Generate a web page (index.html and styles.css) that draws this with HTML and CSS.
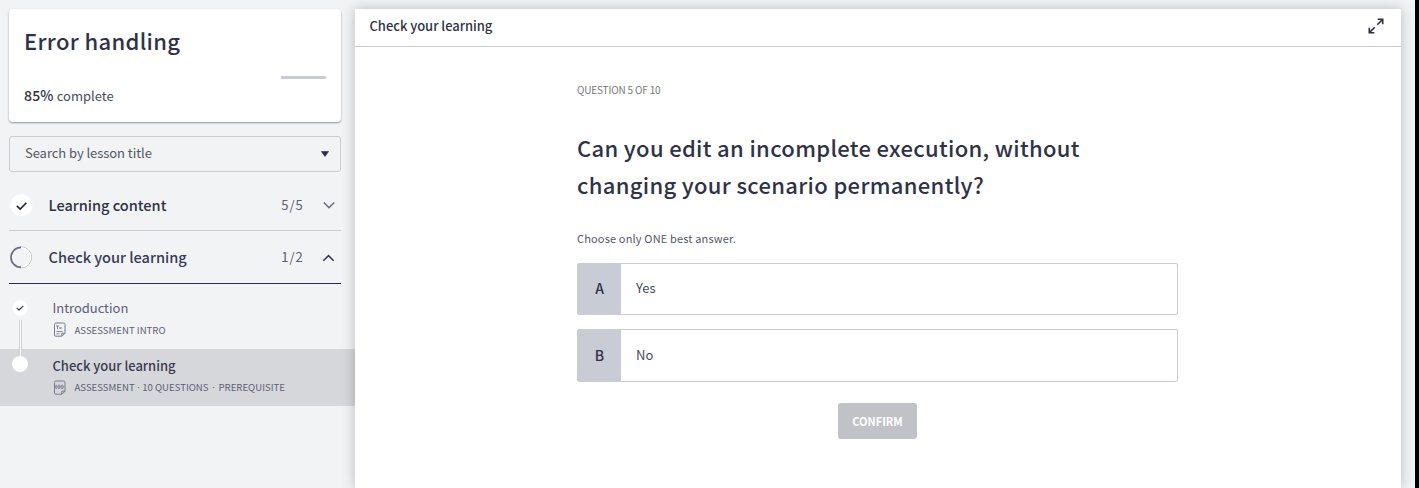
FILE: index.html
```html
<!DOCTYPE html>
<html lang="en">
<head>
<meta charset="utf-8">
<title>Error handling</title>
<link rel="stylesheet" href="styles.css">
</head>
<body>
<div class="app">
  <aside class="sidebar">
    <section class="card">
      <h1 class="course-title"><span>Error handling</span></h1>
      <div class="progress"><div class="progress-rest"></div></div>
      <p class="complete"><span class="complete-value">85%</span> <span class="complete-label">complete</span></p>
    </section>
    <div class="search">
      <span class="search-label">Search by lesson title</span>
      <svg class="caret" width="8" height="6" viewBox="0 0 8 6"><path d="M.4.5h7.2L4 5.5z" fill="#2b2d4a" stroke="#2b2d4a" stroke-width=".6" stroke-linejoin="round"/></svg>
    </div>
    <div class="section">
      <svg class="section-icon" width="24" height="24" viewBox="0 0 24 24"><circle cx="12.300" cy="12.300" r="11" fill="#fff"/><path d="M7.800 12.900l3.400 3.200 6.200-6.400" fill="none" stroke="#21232f" stroke-width="1.600"/></svg>
      <span class="section-name">Learning content</span>
      <span class="count">5/5</span>
      <svg class="chevron" width="14" height="8" viewBox="0 0 14 8"><path d="M1.800 1.500L7 6.600 12.200 1.500" fill="none" stroke="#6f7287" stroke-width="1.500"/></svg>
    </div>
    <div class="section section-open">
      <svg class="section-icon" width="24" height="24" viewBox="0 0 24 24"><path d="M12 1.900a10.500 10.500 0 0 1 0 21" fill="none" stroke="#a4a6b4" stroke-width=".8"/><path d="M12 2.400a10 10 0 0 0 0 20" fill="none" stroke="#6c6f85" stroke-width="1.700"/><path d="M12 2.700a9.700 9.700 0 0 1 0 19.400" fill="none" stroke="#fff" stroke-width="1.200"/></svg>
      <span class="section-name">Check your learning</span>
      <span class="count">1/2</span>
      <svg class="chevron chevron-up" width="14" height="8" viewBox="0 0 14 8"><path d="M1.300 6.700L6.500 1.600 11.700 6.700" fill="none" stroke="#34364e" stroke-width="1.500"/></svg>
    </div>
    <div class="lessons">
      <div class="lesson">
        <div class="rail">
          <svg class="step-done" width="16" height="16" viewBox="0 0 16 16"><circle cx="8.200" cy="8" r="7.700" fill="#fff"/><path d="M4.800 8.100l2.200 1.900 4.200-3.900" fill="none" stroke="#333" stroke-width="1.200"/></svg>
          <span class="rail-line"></span>
        </div>
        <div class="lesson-text">
          <div class="lesson-name intro">Introduction</div>
          <div class="meta">
            <svg width="13" height="15" viewBox="0 0 13 15" fill="none" stroke="#777a8e"><path d="M2.500 1h8q1.500 0 1.500 1.500v8.700l-3 3H2.500Q1.500 14.200 1.500 13V2.500Q1.500 1 2.500 1zM8.800 14v-2.800h3" stroke-width="1"/><path d="M3 4h3M4.500 4v3.200M6.500 5l2 2.200M8.500 5l-2 2.200M3.500 9.500h6M3.500 11.800h3" stroke-width=".9"/></svg>
            <span>ASSESSMENT INTRO</span>
          </div>
        </div>
      </div>
      <div class="lesson lesson-current">
        <div class="rail">
          <span class="rail-line rail-line-short"></span>
          <span class="step-current"></span>
        </div>
        <div class="lesson-text">
          <div class="lesson-name current">Check your learning</div>
          <div class="meta">
            <svg width="13" height="15" viewBox="0 0 13 15" fill="none" stroke="#777a8e"><path d="M2.500 1h8q1.500 0 1.500 1.500v8.700l-3 3H2.500Q1.500 14.200 1.500 13V2.500Q1.500 1 2.500 1zM8.800 14v-2.800h3" stroke-width="1"/><path d="M4 5.200H2.800v3.300H4M5 5.200h1.800v3.300H5zM8.200 5.200H10v3.300H8.200zM2 6.800h9.500" stroke-width=".7"/></svg>
            <span class="meta-list"><span>ASSESSMENT</span><span class="dot">·</span><span>10 QUESTIONS</span><span class="dot dot-wide">·</span><span>PREREQUISITE</span></span>
          </div>
        </div>
      </div>
    </div>
  </aside>
  <main class="panel">
    <header class="panel-head">
      <span class="panel-title">Check your learning</span>
      <svg class="expand" width="16" height="16" viewBox="0 0 16 16" fill="none" stroke="#2b2d42" stroke-width="1.600"><path d="M9.700 1.300h5v5M14.500 1.500L9.300 6.700M6.300 14.700h-5v-5M1.500 14.500l5.200-5.200"/></svg>
    </header>
    <div class="quiz">
      <div class="counter"><span>QUESTION 5 OF 10</span></div>
      <h2 class="question">Can you edit an incomplete execution, without<br>changing your scenario permanently?</h2>
      <p class="hint"><span>Choose only ONE best answer.</span></p>
      <div class="answer"><span class="letter">A</span><span class="answer-text">Yes</span></div>
      <div class="answer answer-b"><span class="letter">B</span><span class="answer-text">No</span></div>
      <button class="confirm">CONFIRM</button>
    </div>
  </main>
  <div class="edge"></div>
</div>
</body>
</html>
```
FILE: styles.css
```css
* { box-sizing: border-box; }
body { margin: 0; background: #f1f3f5; color: #2f3247; font-family: "Noto Sans CJK SC", "Noto Sans", sans-serif; }
h1, h2, p { margin: 0; }
svg { display: block; flex: none; }
.app { display: flex; height: 488px; overflow: hidden; }
.sidebar { width: 355px; flex: none; padding-top: 9px; }
.card { margin: 0 14px 0 9px; height: 113px; padding: 13px 15px 0; background: #fff; border-radius: 4px; box-shadow: 0 1px 2px rgba(0,0,0,.4); }
.course-title { font-size: 22px; line-height: 36px; font-weight: 500; letter-spacing: .33px; }
.progress { height: 3px; margin-top: 18px; display: flex; justify-content: flex-end; }
.progress-rest { width: 45px; background: #c9cbd5; border-radius: 0 1px 1px 0; }
.complete { font-size: 13px; line-height: 20px; margin-top: 7px; display: flex; gap: 3px; color: #484b5a; }
.complete-value { font-size: 14px; line-height: 18px; letter-spacing: .2px; font-weight: 500; color: #2d3142; }
.search { margin: 14px 14px 0 9px; height: 36px; border: 1px solid #c9cbd5; border-radius: 3px; padding: 0 11px 0 15px; display: flex; align-items: center; justify-content: space-between; }
.search-label { font-size: 13px; line-height: 20px; letter-spacing: -.06px; padding-bottom: 2px; color: #555866; }
.section { margin: 0 14px 0 9px; height: 52px; display: flex; align-items: center; border-bottom: 1px solid #c9cbd5; }
.search + .section { height: 59px; padding-top: 8px; }
.section-open { height: 53px; border-bottom-color: #2b2d4a; }
.section-name { margin-left: 15.5px; font-size: 14.6px; line-height: 22px; letter-spacing: -.03px; font-weight: 500; flex: 1; }
.section-open .section-name { color: #393b55; }
.count { font-size: 13px; line-height: 20px; letter-spacing: .9px; color: #5c5f73; }
.chevron { margin: 0 5px 0 18.5px; }
.chevron-up { margin-top: 2px; }
.lesson { display: flex; height: 57px; padding-left: 12px; }
.lessons { padding-top: 8px; }
.lesson-current { background: #d6d7db; }
.rail { width: 16px; display: flex; flex-direction: column; align-items: center; }
.lesson:first-child .rail { padding-top: 8px; }
.rail-line { width: 3px; border: 1px solid #d0d1d5; border-width: 0 1px; background: #fff; margin-top: 4px; flex: 1; }
.rail-line-short { margin: 0; height: 7px; flex: none; }
.step-current { width: 16px; height: 16px; border-radius: 50%; background: #fff; }
.lesson-text { margin-left: 24.5px; padding-top: 6px; }
.lesson-name { font-size: 13px; line-height: 20px; color: #5e6078; }
.intro { letter-spacing: -.03px; }
.current { padding-top: 1px; margin-bottom: -1px; letter-spacing: -.03px; font-weight: 500; color: #393b55; }
.meta { display: flex; align-items: center; gap: 9px; height: 22px; padding-top: 1px; font-size: 9.6px; color: #5e6078; }
.lesson-current .meta { padding-top: 3px; }
.meta-list { display: flex; line-height: 14px; }
.dot { width: 7.5px; text-align: center; font-family: "Noto Sans", sans-serif; line-height: 16px; }
.dot-wide { width: 10px; }
.panel { width: 1046px; flex: none; margin-top: 9px; background: #fff; box-shadow: 0 0 12px rgba(0,0,0,.24); }
.panel-head { height: 38px; border-bottom: 1px solid #c9cbd5; padding: 0 17px 3px 14.5px; display: flex; align-items: center; justify-content: space-between; }
.panel-title { font-size: 13px; line-height: 20px; letter-spacing: -.04px; font-weight: 500; }
.quiz { width: 601px; margin-left: 222px; padding-top: 34px; display: flex; flex-direction: column; }
.counter { font-size: 10px; line-height: 18px; letter-spacing: -.17px; color: #777; }
.question { margin-top: 30px; font-size: 22px; line-height: 37px; letter-spacing: .33px; font-weight: 500; white-space: nowrap; }
.hint { margin-top: 26px; font-size: 11px; line-height: 18px; letter-spacing: .16px; color: #555866; }
.answer { margin-top: 16px; height: 52px; display: flex; align-items: center; border: 1px solid #c9cbd5; border-radius: 2px; }
.answer-b { height: 53px; margin-top: 14px; }
.letter { width: 43px; align-self: stretch; display: flex; align-items: center; justify-content: center; padding: 0 0 2px; background: #c9cbd5; font-size: 14px; font-weight: 500; }
.answer-text { margin-left: 15px; padding-bottom: 3px; font-size: 13px; color: #484b5a; }
.confirm { align-self: center; margin-top: 21px; width: 79px; height: 36px; padding: 0; border: 0; border-radius: 3px; background: #c1c2c8; color: #fff; font: 700 11px/36px "Noto Sans CJK SC", sans-serif; }
.edge { width: 4px; background: #000; margin-left: auto; }
```
